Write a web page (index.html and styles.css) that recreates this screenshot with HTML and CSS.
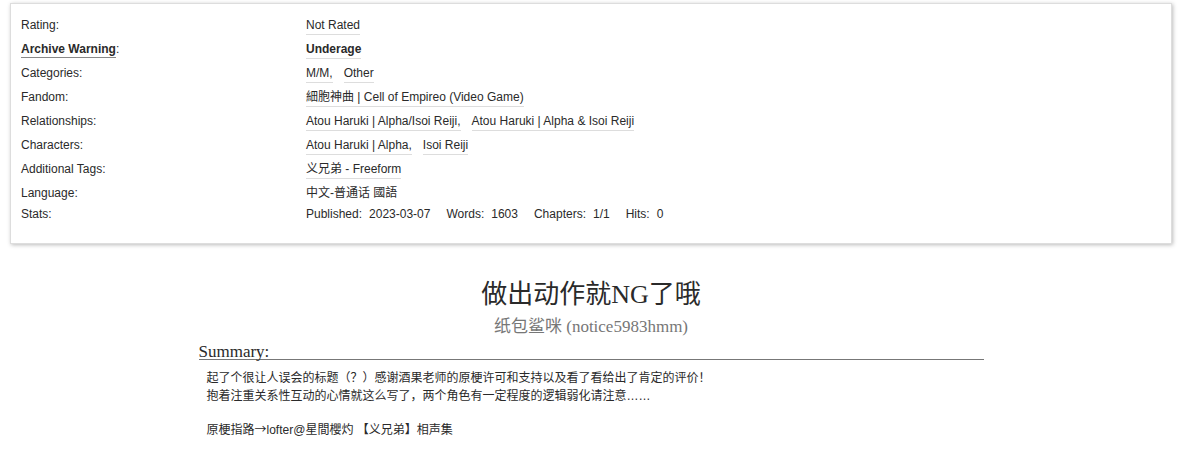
FILE: index.html
```html
<!DOCTYPE html>
<html lang="zh">

<head>
    <meta charset="UTF-8">
    <meta name="viewport" content="width=device-width, initial-scale=1.0">
    <title>做出动作就NG了哦</title>
    <link rel="stylesheet" href="styles.css">
</head>

<body>
    <div class="page">
        <div class="meta-box">
            <dl class="work-meta">
                <dt>Rating:</dt>
                <dd><ul class="tags"><li><a href="#">Not Rated</a></li></ul></dd>

                <dt class="warning"><a href="#">Archive Warning</a>:</dt>
                <dd><ul class="tags"><li><a href="#" class="strong">Underage</a></li></ul></dd>

                <dt>Categories:</dt>
                <dd><ul class="tags"><li><a href="#">M/M,</a></li><li><a href="#">Other</a></li></ul></dd>

                <dt>Fandom:</dt>
                <dd><ul class="tags"><li><a href="#">細胞神曲 | Cell of Empireo (Video Game)</a></li></ul></dd>

                <dt>Relationships:</dt>
                <dd><ul class="tags"><li><a href="#">Atou Haruki | Alpha/Isoi Reiji,</a></li><li><a href="#">Atou Haruki | Alpha &amp; Isoi Reiji</a></li></ul></dd>

                <dt>Characters:</dt>
                <dd><ul class="tags"><li><a href="#">Atou Haruki | Alpha,</a></li><li><a href="#">Isoi Reiji</a></li></ul></dd>

                <dt>Additional Tags:</dt>
                <dd><ul class="tags"><li><a href="#">义兄弟 - Freeform</a></li></ul></dd>

                <dt class="plain">Language:</dt>
                <dd class="plain">中文-普通话 國語</dd>

                <dt class="plain">Stats:</dt>
                <dd class="plain">
                    <dl class="stats">
                        <dt>Published:</dt><dd>2023-03-07</dd>
                        <dt>Words:</dt><dd>1603</dd>
                        <dt>Chapters:</dt><dd>1/1</dd>
                        <dt>Hits:</dt><dd>0</dd>
                    </dl>
                </dd>
            </dl>
        </div>

        <div class="preface">
            <h2 class="title">做出动作就NG了哦</h2>
            <h3 class="byline">纸包鲨咪 (notice5983hmm)</h3>

            <div class="summary">
                <h3 class="heading">Summary:</h3>
                <blockquote>
                    <p>起了个很让人误会的标题（？）感谢酒果老师的原梗许可和支持以及看了看给出了肯定的评价！<br>抱着注重关系性互动的心情就这么写了，两个角色有一定程度的逻辑弱化请注意……</p>
                    <p>原梗指路<span class="cjk">→</span>lofter@星間櫻灼 【义兄弟】相声集</p>
                </blockquote>
            </div>
        </div>
    </div>
</body>

</html>
```

FILE: styles.css
```css
body {
    margin: 0;
    padding: 0;
    background-color: #fff;
    color: #2a2a2a;
    font-family: "Liberation Sans", "Noto Sans CJK SC", sans-serif;
    font-size: 12px;
}

a {
    color: #2a2a2a;
    text-decoration: none;
}

.page {
    width: 1162px;
    margin: 0 0 0 10px;
    padding-top: 3px;
}

.meta-box {
    border: 1px solid #ddd;
    box-shadow: 1px 1px 4px #bbb;
    padding: 13px 10px 16px 10px;
}

.work-meta {
    display: grid;
    grid-template-columns: 25% 75%;
    margin: 0;
}

.work-meta dt,
.work-meta dd {
    margin: 0 0 6px 0;
    line-height: 17px;
}

.work-meta dt.plain,
.work-meta dd.plain {
    margin-bottom: 4px;
}

.work-meta dt.warning a {
    font-weight: bold;
    border-bottom: 1px solid #888;
    padding-bottom: 1px;
}

.tags {
    list-style: none;
    margin: 0;
    padding: 0;
    display: flex;
    gap: 11px;
}

.tags li a {
    display: inline-block;
    border-bottom: 1px solid #ddd;
}

.tags li a.strong {
    font-weight: bold;
}

.stats {
    display: flex;
    margin: 0;
}

.stats dt {
    margin: 0 7px 0 0;
}

.stats dd {
    margin: 0 16px 0 0;
}

.preface {
    text-align: center;
    padding-top: 36px;
}

.title {
    font-family: "Liberation Serif", "Noto Sans CJK SC", serif;
    font-weight: normal;
    font-size: 26px;
    line-height: 30px;
    margin: 0;
}

.byline {
    font-family: "Liberation Serif", "Noto Sans CJK SC", serif;
    font-weight: normal;
    font-size: 17px;
    line-height: 20px;
    color: #777;
    margin: 7px 0 0 0;
}

.summary {
    width: 785px;
    margin: 7px auto 0 auto;
    text-align: left;
}

.summary .heading {
    font-family: "Liberation Serif", "Noto Sans CJK SC", serif;
    font-weight: normal;
    font-size: 17px;
    line-height: 15px;
    margin: 0;
    border-bottom: 1px solid #777;
}

.summary blockquote {
    margin: 9px 0 0 8px;
    font-size: 12px;
    line-height: 18px;
}

.summary blockquote p {
    margin: 0 0 15px 0;
}

.cjk {
    font-family: "Noto Sans CJK SC", sans-serif;
}
```
